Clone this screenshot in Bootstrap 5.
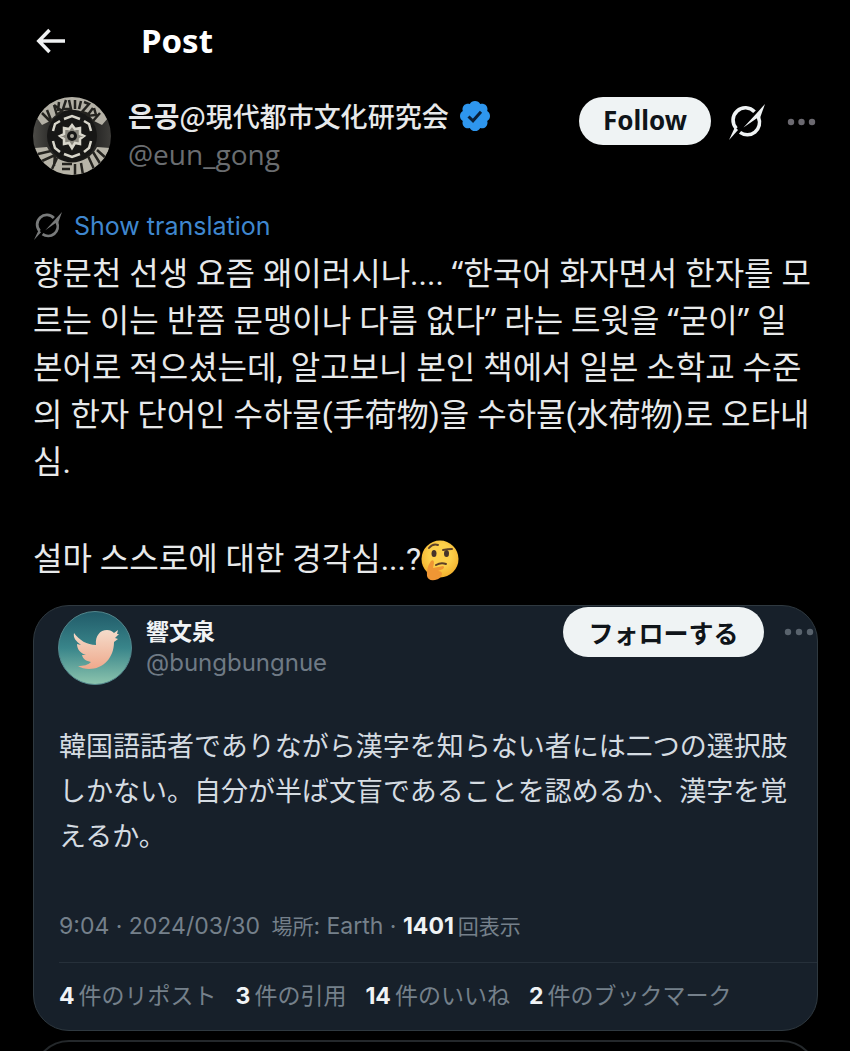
<!DOCTYPE html>
<html lang="ko" data-bs-theme="dark">
<head>
<meta charset="utf-8">
<meta name="viewport" content="width=device-width, initial-scale=1">
<title>Post</title>
<link href="https://cdn.jsdelivr.net/npm/bootstrap@5.3.0/dist/css/bootstrap.min.css" rel="stylesheet">
<style>
body { background: #000; color: #e7e9ea; font-family: "Noto Sans", "Noto Sans CJK KR", sans-serif; }
button { flex: none; }
.icon-btn { background: none; border: 0; padding: 0; line-height: 0; }
.page { padding: 0 32px 0 33px; }
.topbar { height: 82px; gap: 75px; padding-left: 3px; }
.topbar h1 { font-size: 33px; line-height: 40px; }
.author { margin-top: 14px; padding-right: 1px; }
.author-text { margin-left: 17px; }
.author-name { font: 700 28px/39px "Noto Sans CJK KR", sans-serif; gap: 10px; }
.author-name .han { font-family: "Noto Sans CJK JP", sans-serif; font-weight: 500; font-size: 27px; }
.handle { font: 400 28px/38px "Open Sans", sans-serif; color: #6a6d70; }
.pill { background: #eff3f4; color: #0f1419; border: 0; border-radius: 50px; font-weight: 700; }
.follow { width: 132px; height: 48px; font-size: 26px; line-height: 44px; padding: 0 0 2px; margin-bottom: 2px; }
.author-actions { gap: 18px; margin-top: 1px; }
.translate { color: #3f87cf; font: 400 25px/32px "Inter", sans-serif; gap: 11px; margin-top: 34px; }
.post-text { font: 400 32px/47px Roboto, "Noto Sans CJK KR", sans-serif; margin-top: 9px; }
.post-text p { margin: 0 -8px 50px 0; }
.quot { font-family: "Noto Sans", sans-serif; line-height: 1; }
.quote { background: #17202a; border: 1px solid #2f3940; border-radius: 36px; margin-top: -28px; font-family: "Inter", "Noto Sans CJK JP", sans-serif; }
.quote-head { padding: 1px 3px 0 24px; }
.quote-id { padding: 6px 0 0 14px; }
.quote-name { font: 700 23px/34px "Noto Sans CJK JP", sans-serif; color: #f0f3f5; }
.quote-handle { font-size: 24px; line-height: 32px; color: #6f7a85; }
.follow-ja { width: 201px; height: 50px; font: 700 25px/46px "Noto Sans CJK JP", sans-serif; padding: 0; }
.quote-text { font: 400 27px/45px "Noto Sans CJK JP", sans-serif; color: #d5dce2; padding: 37px 0 0 25px; margin: 0; }
.quote-meta { font-size: 23px; line-height: 32px; color: #75808b; padding: 53px 0 19px; margin-left: 25px; border-bottom: 1px solid #26303a; }
.quote-meta .kana { font-size: 21px; }
.quote-meta b, .quote-stats b { color: #f0f3f5; font-weight: 700; }
.quote-stats { font-size: 23px; line-height: 34px; color: #75808b; padding: 16px 0 17px 25px; gap: 19px; }
.quote-stats a { color: inherit; text-decoration: none; display: flex; gap: 4px; }
.next-peek { height: 11px; margin-top: 9px; overflow: hidden; }
.next-frame { height: 80px; border: 2px solid #24282b; border-radius: 36px; }
</style>
</head>
<body>
<div class="page">
  <header class="topbar d-flex align-items-center">
    <button class="icon-btn" aria-label="Back">
      <svg width="30" height="26" viewBox="0 0 30 26" fill="none" stroke="#eff1f2" stroke-width="3.500"><path d="M13.500 2 2.800 13 13.500 24M3 13h26"/></svg>
    </button>
    <h1 class="fw-bold m-0">Post</h1>
  </header>

  <main>
    <div class="author d-flex align-items-start">
      <svg class="flex-shrink-0" width="78" height="80" viewBox="0 0 78 80" role="img" aria-label="은공">
        <defs><clipPath id="medal"><circle cx="39" cy="40" r="39"/></clipPath>
        <linearGradient id="steel" x1="0" x2="1"><stop offset="0" stop-color="#4c4b47"/><stop offset=".4" stop-color="#151514"/><stop offset=".7" stop-color="#1c1c1b"/><stop offset="1" stop-color="#3d3c39"/></linearGradient></defs>
        <g clip-path="url(#medal)">
          <rect width="78" height="80" fill="url(#steel)"/>
          <path d="M4 22 9 29 17 25A27 27 0 0 1 61 25L69 29 75 22 60 0H18Z" fill="#b3b0a5"/>
          <path d="M2 52 14 51A28 28 0 0 0 64 51L77 52 63 80H15Z" fill="#b7b4a8"/>
          <g fill="none" stroke="#24231f" stroke-width="2.500">
            <path d="m9 17 9 9M14 14l4 10M21 9l3 10 5-4-8-6M25 15l1-9M33 4l-3 9h8l-2-9M42 4v9M48 5l-2 8M51 6l5 2-7 8 6 2M60 12l-6 8 9-1-2-7M67 17l-7 8"/>
            <path d="m5 58 13-3M9 65l13-6-1 11M24 62l-5 11M29 68h10M29 73h8M42 68v12M48 67l2 12M55 60l6 13M60 56l8 13M64 54l10 9"/>
          </g>
          <circle cx="39" cy="40" r="25" fill="#171716"/>
          <g fill="none" stroke="#d8d6cb" stroke-width="2.500">
            <path d="m31 23 8-3 8 3M51 25l5 3 2 7M58 45l-2 7-5 4M47 58l-8 3-8-3M27 56l-5-4-2-7M20 35l2-7 5-3"/>
            <path d="m39 29 3 4 5-1v6l4 2-4 3v5l-5-1-3 5-3-5-5 1v-5l-4-3 4-2v-6l5 1Z" fill="#88867d"/>
          </g>
          <circle cx="39" cy="40" r="5" fill="#171716"/><circle cx="39" cy="40" r="2" fill="#aaa79c"/>
        </g>
      </svg>
      <div class="author-text flex-grow-1">
        <div class="author-name d-flex align-items-center text-nowrap"><span>은공<span class="han">@現代都市文化研究会</span></span>
          <svg width="32" height="32" viewBox="0 0 32 32" role="img" aria-label="Verified"><path d="M16 1c2.400 0 4.300 1.200 5.200 3.100 2-.7 4.200-.2 5.700 1.200s2 3.700 1.300 5.700C30 12 31 13.900 31 16s-1 4-2.800 5c.7 2 .2 4.200-1.300 5.700s-3.700 1.900-5.700 1.200C20.300 29.800 18.400 31 16 31s-4.300-1.200-5.200-3.100c-2 .7-4.200.3-5.700-1.200S3.100 23 3.800 21C2 20 1 18.100 1 16s1-4 2.800-5c-.7-2-.2-4.300 1.300-5.700s3.700-1.900 5.700-1.200C11.700 2.200 13.600 1 16 1Z" fill="#2e96ee"/><path d="m9.500 16.500 4.500 4.300 8-9" fill="none" stroke="#0a2038" stroke-width="3"/></svg>
        </div>
        <div class="handle">@eun_gong</div>
      </div>
      <div class="author-actions d-flex align-items-center">
        <button class="pill follow">Follow</button>
        <button class="icon-btn" aria-label="Grok"><svg width="36" height="36" viewBox="0 0 36 36"><g id="grok"><g fill="none" stroke="#eff3f4" stroke-width="3.600"><path d="M25.500 7.800A12.300 12.300 0 0 0 7.300 24.500"/><path d="M11 28.400A12.300 12.300 0 0 0 29.500 13.500"/></g><path d="M36 0 31 14 27.500 14.500 14.500 23.500 27 10Z" fill="#eff3f4"/><path d="M0 36 6 23 9 26Z" fill="#eff3f4"/></g></svg></button>
        <button class="icon-btn" aria-label="More"><svg width="34" height="10" viewBox="0 0 34 10" fill="#6b6970"><circle cx="8" cy="5" r="3.200"/><circle cx="18.500" cy="5" r="3.200"/><circle cx="29" cy="5" r="3.200"/></svg></button>
      </div>
    </div>

    <a href="#" class="translate d-flex align-items-center text-decoration-none"><svg width="30" height="28" viewBox="0 0 36 36" opacity=".5"><use href="#grok"/></svg>Show translation</a>

    <div class="post-text">
      <p>향문천 선생 요즘 왜이러시나.... <span class="quot">“</span>한국어 화자면서 한자를 모<br>르는 이는 반쯤 문맹이나 다름 없다<span class="quot">”</span> 라는 트윗을 <span class="quot">“</span>굳이<span class="quot">”</span> 일<br>본어로 적으셨는데, 알고보니 본인 책에서 일본 소학교 수준<br>의 한자 단어인 수하물(手荷物)을 수하물(水荷物)로 오타내<br>심.</p>
      <p class="d-flex align-items-center">설마 스스로에 대한 경각심...?<svg width="38" height="42" viewBox="0 0 38 42" role="img" aria-label="🤔"><defs><radialGradient id="face" cx=".5" cy=".4" r=".6"><stop offset=".5" stop-color="#fdd04b"/><stop offset="1" stop-color="#f2b02c"/></radialGradient></defs><circle cx="19" cy="20" r="18.500" fill="url(#face)"/><ellipse cx="13" cy="14.500" rx="2.500" ry="3.500" fill="#46342a"/><ellipse cx="25.500" cy="14.500" rx="2.500" ry="3.500" fill="#46342a"/><path d="M8 9q4-5 9-3M22 11q5-1 9-1M15 26q5-3 10-1" fill="none" stroke="#5d4127" stroke-width="2" stroke-linecap="round"/><path d="M10 22q3-2 3 2l-1 5 10-2q2 1 0 3l-5 2q4 0 4 3-1 5-7 6-7 1-8-4-1-8 4-15Z" fill="#ef9634"/></svg></p>
    </div>

    <article class="quote" lang="ja">
      <div class="quote-head d-flex align-items-start">
        <svg class="flex-shrink-0 mt-1" width="74" height="74" viewBox="0 0 74 74" role="img" aria-label="響文泉"><defs><linearGradient id="sea" x2="0" y2="1"><stop offset="0" stop-color="#215b69"/><stop offset=".5" stop-color="#39858a"/><stop offset="1" stop-color="#8dc5ae"/></linearGradient><linearGradient id="wing" x2="0" y2="1"><stop offset="0" stop-color="#f5dccb"/><stop offset="1" stop-color="#efa98c"/></linearGradient></defs><circle cx="37" cy="37" r="36.500" fill="url(#sea)" stroke="#53868c"/><path d="M16 22c5 7 13 12 22 12-1-9 4-15 11-15 3 0 5 1 7 3l4-3-1 4h2l-4 4 3 1-4 3c0 16-11 27-25 27-4 0-8-1-11-3 6 0 10-1 13-4-5-1-8-3-9-7h4c-6-2-9-6-9-11l4 1c-5-4-8-7-7-12Z" fill="url(#wing)"/></svg>
        <div class="quote-id flex-grow-1">
          <div class="quote-name">響文泉</div>
          <div class="quote-handle">@bungbungnue</div>
        </div>
        <button class="pill follow-ja">フォローする</button>
        <button class="icon-btn ms-3 mt-3 pt-1" aria-label="More"><svg width="34" height="10" viewBox="0 0 34 10" fill="#59636d"><circle cx="8" cy="5" r="3.200"/><circle cx="19" cy="5" r="3.200"/><circle cx="30" cy="5" r="3.200"/></svg></button>
      </div>
      <p class="quote-text">韓国語話者でありながら漢字を知らない者には二つの選択肢<br>しかない。自分が半ば文盲であることを認めるか、漢字を覚<br>えるか。</p>
      <div class="quote-meta">9:04 · 2024/03/30&ensp;<span class="kana">場所</span>: Earth · <b>1401</b><span class="kana ms-1">回表示</span></div>
      <div class="quote-stats d-flex">
        <a href="#"><b>4</b>件のリポスト</a><a href="#"><b>3</b>件の引用</a><a href="#"><b>14</b>件のいいね</a><a href="#"><b>2</b>件のブックマーク</a>
      </div>
    </article>
    <div class="next-peek"><div class="next-frame"></div></div>
  </main>
</div>
<script src="https://cdn.jsdelivr.net/npm/bootstrap@5.3.0/dist/js/bootstrap.bundle.min.js"></script>
</body>
</html>
